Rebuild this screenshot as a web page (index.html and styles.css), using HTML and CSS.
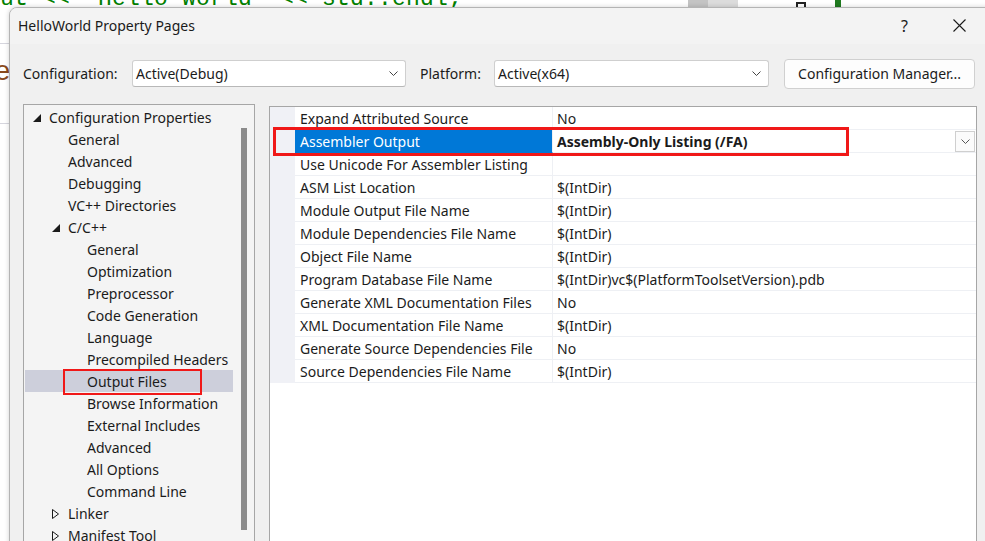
FILE: index.html
```html
<!DOCTYPE html>
<html>
<head>
<meta charset="utf-8">
<link rel="stylesheet" href="styles.css">
</head>
<body>
<div class="desk">
  <div class="editor">
    <div class="code-line">ut &lt;&lt; "Hello World" &lt;&lt; std::endl;</div>
    <div class="code-e">e</div>
    <div class="ed-rule ed-rule-1"></div>
    <div class="ed-rule ed-rule-2"></div>
    <div class="ed-scroll"></div>
    <div class="ed-mark"></div>
    <div class="ed-green"></div>
  </div>

  <div class="dialog">
    <div class="titlebar">
      <span class="title">HelloWorld Property Pages</span>
      <span class="tb-btn help">?</span>
      <span class="tb-btn close">
        <svg width="13" height="13" viewBox="0 0 13 13"><path d="M0.5 0.5 L12.5 12.5 M12.5 0.5 L0.5 12.5" stroke="#1a1a1a" stroke-width="1.1" fill="none"/></svg>
      </span>
    </div>

    <div class="dlg-body">
      <div class="config-row">
        <span class="lbl lbl-config">Configuration:</span>
        <div class="combo combo-config">
          <span>Active(Debug)</span>
          <svg class="chev" width="9" height="5" viewBox="0 0 9 5"><path d="M0.5 0.5 L4.5 4.5 L8.5 0.5" stroke="#444" stroke-width="1" fill="none"/></svg>
        </div>
        <span class="lbl lbl-platform">Platform:</span>
        <div class="combo combo-platform">
          <span>Active(x64)</span>
          <svg class="chev" width="9" height="5" viewBox="0 0 9 5"><path d="M0.5 0.5 L4.5 4.5 L8.5 0.5" stroke="#444" stroke-width="1" fill="none"/></svg>
        </div>
        <div class="btn">Configuration Manager...</div>
      </div>

      <div class="panes">
        <div class="tree">
          <div class="tree-list">
            <div class="node l0"><span class="tw"><svg width="8" height="8" viewBox="0 0 8 8"><polygon points="8,0 8,8 0,8" fill="#1a1a1a"/></svg></span>Configuration Properties</div>
            <div class="node l1"><span class="tw"></span>General</div>
            <div class="node l1"><span class="tw"></span>Advanced</div>
            <div class="node l1"><span class="tw"></span>Debugging</div>
            <div class="node l1"><span class="tw"></span>VC++ Directories</div>
            <div class="node l1"><span class="tw"><svg width="8" height="8" viewBox="0 0 8 8"><polygon points="8,0 8,8 0,8" fill="#1a1a1a"/></svg></span>C/C++</div>
            <div class="node l2"><span class="tw"></span>General</div>
            <div class="node l2"><span class="tw"></span>Optimization</div>
            <div class="node l2"><span class="tw"></span>Preprocessor</div>
            <div class="node l2"><span class="tw"></span>Code Generation</div>
            <div class="node l2"><span class="tw"></span>Language</div>
            <div class="node l2"><span class="tw"></span>Precompiled Headers</div>
            <div class="node l2 selected"><span class="tw"></span>Output Files<span class="mark mark-tree"></span></div>
            <div class="node l2"><span class="tw"></span>Browse Information</div>
            <div class="node l2"><span class="tw"></span>External Includes</div>
            <div class="node l2"><span class="tw"></span>Advanced</div>
            <div class="node l2"><span class="tw"></span>All Options</div>
            <div class="node l2"><span class="tw"></span>Command Line</div>
            <div class="node l1"><span class="tw"><svg width="8" height="10" viewBox="0 0 8 10"><polygon points="0.5,0.5 6.5,5 0.5,9.5" fill="none" stroke="#1a1a1a" stroke-width="1"/></svg></span>Linker</div>
            <div class="node l1"><span class="tw"><svg width="8" height="10" viewBox="0 0 8 10"><polygon points="0.5,0.5 6.5,5 0.5,9.5" fill="none" stroke="#1a1a1a" stroke-width="1"/></svg></span>Manifest Tool</div>
          </div>
          <div class="vscroll"><div class="thumb"></div></div>
        </div>

        <div class="grid">
          <div class="row"><span class="gut"></span><span class="name">Expand Attributed Source</span><span class="val">No</span></div>
          <div class="row active"><span class="gut"></span><span class="name">Assembler Output</span><span class="val bold">Assembly-Only Listing (/FA)<span class="dd"><svg width="9" height="5" viewBox="0 0 9 5"><path d="M0.5 0.5 L4.5 4.5 L8.5 0.5" stroke="#555" stroke-width="1" fill="none"/></svg></span></span><span class="mark mark-grid"></span></div>
          <div class="row"><span class="gut"></span><span class="name">Use Unicode For Assembler Listing</span><span class="val"></span></div>
          <div class="row"><span class="gut"></span><span class="name">ASM List Location</span><span class="val">$(IntDir)</span></div>
          <div class="row"><span class="gut"></span><span class="name">Module Output File Name</span><span class="val">$(IntDir)</span></div>
          <div class="row"><span class="gut"></span><span class="name">Module Dependencies File Name</span><span class="val">$(IntDir)</span></div>
          <div class="row"><span class="gut"></span><span class="name">Object File Name</span><span class="val">$(IntDir)</span></div>
          <div class="row"><span class="gut"></span><span class="name">Program Database File Name</span><span class="val">$(IntDir)vc$(PlatformToolsetVersion).pdb</span></div>
          <div class="row"><span class="gut"></span><span class="name">Generate XML Documentation Files</span><span class="val">No</span></div>
          <div class="row"><span class="gut"></span><span class="name">XML Documentation File Name</span><span class="val">$(IntDir)</span></div>
          <div class="row"><span class="gut"></span><span class="name">Generate Source Dependencies File</span><span class="val">No</span></div>
          <div class="row"><span class="gut"></span><span class="name">Source Dependencies File Name</span><span class="val">$(IntDir)</span></div>
        </div>
      </div>
    </div>
  </div>
</div>
</body>
</html>
```

FILE: styles.css
```css
* { box-sizing: border-box; }
html, body { margin: 0; padding: 0; }
body {
  font-family: "Noto Sans", "Open Sans", sans-serif;
  font-size: 14px;
  color: #1b1b1b;
}
.desk {
  position: relative;
  width: 985px;
  height: 541px;
  overflow: hidden;
  background: #ffffff;
}

/* editor behind the dialog */
.editor { position: absolute; inset: 0; }
.code-line {
  position: absolute;
  left: 0;
  top: -16px;
  font-family: "Liberation Mono", monospace;
  font-size: 23px;
  line-height: 30px;
  letter-spacing: 0.2px;
  color: #008000;
  white-space: pre;
}
.code-e {
  position: absolute;
  left: -6px;
  top: 56px;
  font-family: "Liberation Mono", monospace;
  font-size: 28px;
  line-height: 34px;
  color: #8a4a1c;
}
.ed-rule { position: absolute; left: 0; width: 12px; height: 1px; background: #d6d6de; }
.ed-rule-1 { top: 43px; }
.ed-rule-2 { top: 123px; }
.ed-scroll { position: absolute; left: 688px; top: 0; width: 50px; height: 7px; background: #dcdcdc; border-left: 20px solid #c4c4c4; }
.ed-mark { position: absolute; left: 796px; top: 2px; width: 10px; height: 5px; border: 2px solid #222; border-bottom: none; }
.ed-green { position: absolute; left: 835px; top: 0; width: 6px; height: 7px; background: #1f7a1f; }

/* dialog window */
.dialog {
  position: absolute;
  left: 9px;
  top: 7px;
  width: 1000px;
  height: 560px;
  background: #f0f0f0;
  border: 1px solid #b4b4b4;
  border-radius: 8px 0 0 0;
  box-shadow: 0 0 5px rgba(0, 0, 0, 0.18);
  overflow: hidden;
}
.titlebar {
  height: 36px;
  background: #f3f3f3;
  display: flex;
  align-items: center;
  padding-left: 8px;
  padding-bottom: 1px;
}
.title { font-size: 14px; color: #1a1a1a; }
.tb-btn {
  width: 55px;
  display: flex;
  justify-content: center;
  align-items: center;
  font-size: 16px;
  color: #1a1a1a;
}
.help { margin-left: auto; }
.close { margin-right: 21px; }

.dlg-body { padding-left: 13px; }

.config-row {
  display: flex;
  align-items: center;
  height: 30px;
  margin-top: 14px;
  padding-top: 1px;
}
.lbl { font-size: 14px; }
.lbl-config { width: 109px; }
.lbl-platform { width: 74px; margin-left: 14px; }
.combo {
  height: 27px;
  background: #ffffff;
  border: 1px solid #cfcfcf;
  border-bottom-color: #b8b8b8;
  border-radius: 3px;
  display: flex;
  align-items: center;
  padding-left: 3px;
  padding-right: 7px;
}
.combo span { flex: 1; }
.combo-config { width: 274px; }
.combo-platform { width: 275px; }
.btn {
  margin-left: 15px;
  width: 191px;
  height: 30px;
  background: #fdfdfd;
  border: 1px solid #d0d0d0;
  border-radius: 4px;
  display: flex;
  align-items: center;
  justify-content: center;
}

.panes {
  display: flex;
  align-items: flex-start;
  margin-top: 16px;
}

/* tree */
.tree {
  width: 232px;
  height: 460px;
  background: #f4f4f4;
  border: 1px solid #a6a6a6;
  display: flex;
  padding-top: 1px;
}
.tree-list { width: 209px; }
.node {
  position: relative;
  height: 22px;
  line-height: 22px;
  padding-top: 2px;
  display: flex;
  align-items: center;
  white-space: nowrap;
}
.node.l0 { padding-left: 9px; }
.node.l1 { padding-left: 28px; }
.node.l2 { padding-left: 47px; }
.tw { width: 16px; height: 20px; display: flex; align-items: center; flex: none; }
.tw svg { display: block; }
.node.selected { background: #cdcfdb; margin-left: 1px; padding-left: 46px; }
.vscroll { flex: 1; padding-top: 22px; padding-left: 8px; }
.thumb { width: 6px; height: 402px; background: #8b8b8b; }

.mark {
  position: absolute;
  z-index: 5;
  border: 3px solid #f01818;
  pointer-events: none;
}
.mark-tree { left: 38px; top: -1px; width: 139px; height: 26px; border-width: 2.5px; }

/* property grid */
.grid {
  margin-left: 14px;
  margin-top: 2px;
  width: 708px;
  height: 460px;
  background: #ffffff;
  border: 1px solid #a6a6a6;
}
.row {
  position: relative;
  display: flex;
  height: 23px;
}
.gut { width: 25px; background: #f0f1f6; flex: none; }
.name {
  width: 258px;
  flex: none;
  padding-left: 5px;
  padding-top: 1px;
  line-height: 22px;
  border-bottom: 1px solid #eef0f4;
  border-right: 1px solid #eef0f4;
  white-space: nowrap;
}
.val {
  flex: 1;
  padding-left: 4px;
  padding-top: 1px;
  line-height: 22px;
  border-bottom: 1px solid #eef0f4;
  white-space: nowrap;
  display: flex;
  align-items: center;
}
.row.active .name { background: #0078d7; color: #ffffff; border-bottom-color: #0078d7; }
.bold { font-weight: 700; }
.dd {
  margin-left: auto;
  margin-right: 1px;
  margin-top: -1px;
  width: 20px;
  height: 21px;
  border: 1px solid #cfcfcf;
  background: #fbfbfb;
  display: flex;
  align-items: center;
  justify-content: center;
}
.mark-grid { left: 3px; top: -3px; width: 576px; height: 29px; }
```
